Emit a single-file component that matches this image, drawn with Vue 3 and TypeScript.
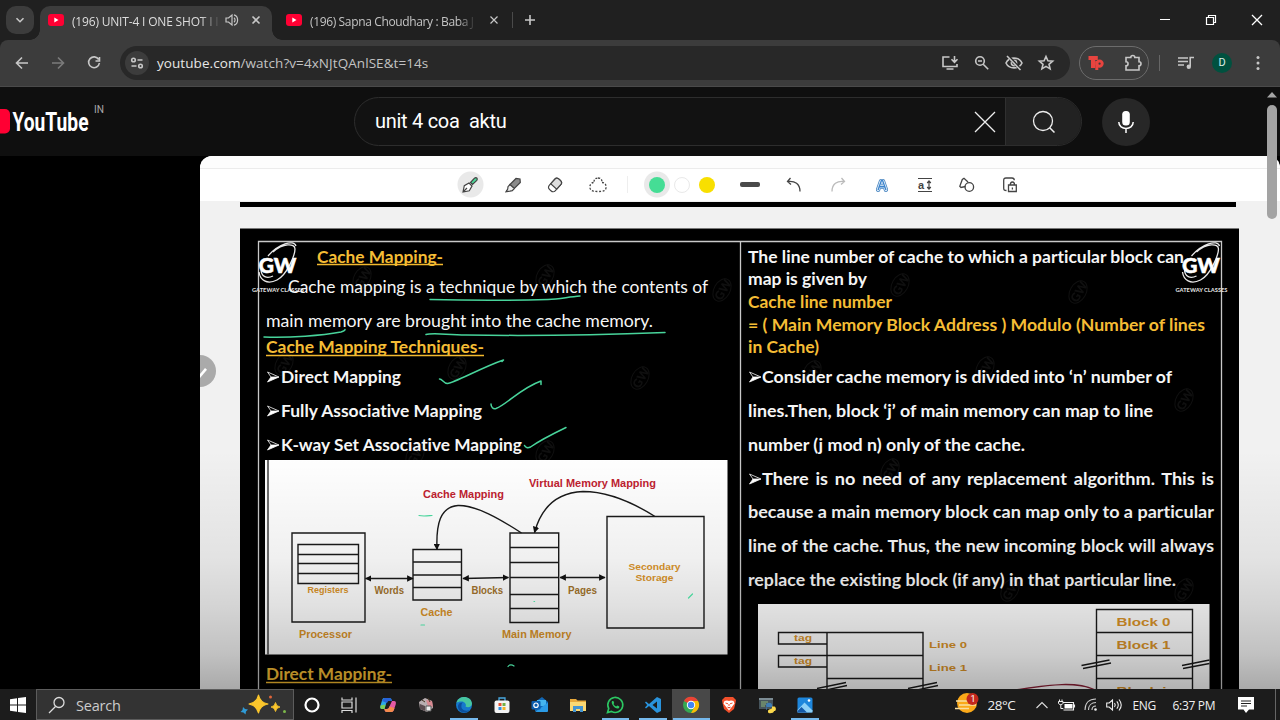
<script setup lang="ts">
interface SlideLine {
  t: string
  x: number
  y: number
  w: number
  kind?: 'plain' | 'gold' | 'head'
  ws?: number
}

const lines: SlideLine[] = [
  { t: 'Cache Mapping-', x: 317, y: 262.5, w: 126, kind: 'head' },
  { t: 'Cache mapping is a technique by which the contents of', x: 288, y: 293, w: 420, kind: 'plain' },
  { t: 'main memory are brought into the cache memory.', x: 266, y: 327, w: 387, kind: 'plain' },
  { t: 'Cache Mapping Techniques-', x: 266, y: 353, w: 218, kind: 'head' },
  { t: 'Direct Mapping', x: 281, y: 383, w: 120 },
  { t: 'Fully Associative Mapping', x: 281, y: 417, w: 201 },
  { t: 'K-way Set Associative Mapping', x: 281, y: 451, w: 241 },
  { t: 'Direct Mapping-', x: 266, y: 680, w: 126, kind: 'head' },
  { t: 'The line number of cache to which a particular block can', x: 748, y: 262.5, w: 436 },
  { t: 'map is given by', x: 748, y: 285, w: 119 },
  { t: 'Cache line number', x: 748, y: 307.5, w: 144, kind: 'gold' },
  { t: '= ( Main Memory Block Address ) Modulo (Number of lines', x: 748, y: 330.5, w: 457, kind: 'gold' },
  { t: 'in Cache)', x: 748, y: 353, w: 71, kind: 'gold' },
  { t: 'Consider cache memory is divided into ‘n’ number of', x: 762, y: 383, w: 410 },
  { t: 'lines.Then, block ‘j’ of main memory can map to line', x: 748, y: 417, w: 405 },
  { t: 'number (j mod n) only of the cache.', x: 748, y: 451, w: 277 },
  { t: 'There is no need of any replacement algorithm. This is', x: 762, y: 484.5, w: 452, ws: 2.2 },
  { t: 'because a main memory block can map only to a particular', x: 748, y: 518, w: 466 },
  { t: 'line of the cache. Thus, the new incoming block will always', x: 748, y: 552, w: 466, ws: 0.5 },
  { t: 'replace the existing block (if any) in that particular line.', x: 748, y: 586, w: 428 },
]

const bullets = [
  [267, 377], [267, 411], [267, 445], [749, 377], [749, 479],
]

const labels = [
  { t: 'Cache Mapping', x: 423, y: 498, w: 81, s: 10.5, c: 'red' },
  { t: 'Virtual Memory Mapping', x: 529, y: 486.5, w: 127, s: 10.5, c: 'red' },
  { t: 'Registers', x: 307.5, y: 593, w: 41, s: 8.5, c: 'amber' },
  { t: 'Words', x: 374.5, y: 594, w: 29.5, s: 10, c: 'brown' },
  { t: 'Blocks', x: 471.5, y: 593.5, w: 31.5, s: 10, c: 'brown' },
  { t: 'Pages', x: 568, y: 594, w: 29, s: 10, c: 'brown' },
  { t: 'Secondary', x: 628.5, y: 569.5, w: 52, s: 9.5, c: 'amber' },
  { t: 'Storage', x: 635.5, y: 580.5, w: 38, s: 9.5, c: 'amber' },
  { t: 'Cache', x: 420.5, y: 615.5, w: 32, s: 10.5, c: 'amber' },
  { t: 'Processor', x: 299, y: 638, w: 53, s: 10.5, c: 'amber' },
  { t: 'Main Memory', x: 502, y: 638, w: 69.5, s: 10.5, c: 'amber' },
  { t: 'tag', x: 794, y: 641, w: 18, s: 9, c: 'amber' },
  { t: 'tag', x: 794, y: 664, w: 18, s: 9, c: 'amber' },
  { t: 'Line 0', x: 929, y: 647.5, w: 38, s: 9.5, c: 'amber' },
  { t: 'Line 1', x: 929, y: 670.5, w: 38, s: 9.5, c: 'amber' },
  { t: 'Block 0', x: 1116.5, y: 625.5, w: 54, s: 11, c: 'amber' },
  { t: 'Block 1', x: 1116.5, y: 648.5, w: 54, s: 11, c: 'amber' },
  { t: 'Block i', x: 1116.5, y: 695, w: 50, s: 11, c: 'amber' },
]

const watermarks = [
  [362, 278], [545, 276], [722, 290], [284, 364], [640, 378], [457, 368], [900, 285], [1078, 292],
  [812, 372], [985, 368], [1184, 400], [415, 455], [545, 452], [890, 470], [1184, 590], [1010, 590],
]

const pins = [
  'cortana', 'taskview', 'copilot', 'game', 'edge', 'store', 'outlook',
  'files', 'whatsapp', 'vscode', 'chrome', 'brave', 'python', 'photos',
]
const open = ['edge', 'whatsapp', 'vscode', 'chrome', 'photos']
</script>

<template>
  <div class="screen">
    <header class="tabs">
      <div class="tab-search">
        <svg width="12" height="12" viewBox="0 0 12 12"><path d="M2.500 4.200 6 7.700l3.500-3.500" class="ln w2" /></svg>
      </div>
      <div class="tab active">
        <svg class="fav" width="16" height="12" viewBox="0 0 16 12"><rect width="16" height="12" rx="3" fill="#ff0033" /><path d="M6.300 3.600v4.800L10.500 6z" fill="#fff" /></svg>
        <span class="title t1">(196) UNIT-4 I ONE SHOT I I</span>
        <svg class="speaker" width="14" height="14" viewBox="0 0 14 14"><path d="M1 5h2.500L7 2v10L3.500 9H1zM9 4.800c1.400 1 1.400 3.400 0 4.400M9 1.800c4.800 1.400 4.800 9 0 10.400" class="ln" /></svg>
        <svg class="close" width="10" height="10" viewBox="0 0 10 10"><path d="m1.500 1.500 7 7m0-7-7 7" class="ln w2" /></svg>
      </div>
      <div class="tab">
        <svg class="fav" width="16" height="12" viewBox="0 0 16 12"><rect width="16" height="12" rx="3" fill="#ff0033" /><path d="M6.300 3.600v4.800L10.500 6z" fill="#fff" /></svg>
        <span class="title t2">(196) Sapna Choudhary : Baba J</span>
        <svg class="close" width="10" height="10" viewBox="0 0 10 10"><path d="m1.500 1.500 7 7m0-7-7 7" class="ln" /></svg>
      </div>
      <i class="tab-sep"></i>
      <svg class="plus" width="12" height="12" viewBox="0 0 12 12"><path d="M6 1v10M1 6h10" class="ln w2" /></svg>
      <div class="win">
        <span><svg width="12" height="12" viewBox="0 0 12 12"><path d="M1 5.500h10" stroke="#fff" /></svg></span>
        <span><svg width="12" height="12" viewBox="0 0 12 12"><path d="M1.500 3.500h7v7h-7zM3.500 3.500v-2h7v7h-2" fill="none" stroke="#fff" stroke-width="1.200" /></svg></span>
        <span><svg width="12" height="12" viewBox="0 0 12 12"><path d="m1 1 10 10m0-10L1 11" stroke="#fff" stroke-width="1.300" /></svg></span>
      </div>
    </header>

    <div class="toolbar">
      <span class="nav"><svg width="16" height="16" viewBox="0 0 16 16"><path d="M14 8H3M8 2.500 2.500 8 8 13.500" class="ln w2" /></svg></span>
      <span class="nav dim"><svg width="16" height="16" viewBox="0 0 16 16"><path d="M2 8h11M8 2.500 13.500 8 8 13.500" class="ln w2" /></svg></span>
      <span class="nav"><svg width="16" height="16" viewBox="0 0 16 16"><path d="M12.700 4.500A5.400 5.400 0 1 0 13.400 8M13.500 2v4h-4" class="ln w2" /></svg></span>
      <div class="omni">
        <span class="site">
          <svg width="14" height="14" viewBox="0 0 14 14"><circle cx="3.500" cy="4" r="1.800" class="ln w2" /><path d="M7.500 4h5M1.500 10h5" class="ln w2" /><circle cx="10.500" cy="10" r="1.800" class="ln w2" /></svg>
        </span>
        <span class="url"><b>youtube.com</b>/watch?v=4xNJtQAnlSE&amp;t=14s</span>
        <div class="omni-icons">
          <span><svg width="18" height="16" viewBox="0 0 18 16"><path d="M8.500 2H2v9.500h14V9M5.500 14h7M13.500 1v6m-3-2.700 3 3 3-3" class="ln w2" /></svg></span>
          <span><svg width="16" height="16" viewBox="0 0 16 16"><circle cx="6" cy="6" r="4.300" class="ln w2" /><path d="M4 6h4M9.200 9.200l5 5" class="ln w2" /></svg></span>
          <span><svg width="18" height="16" viewBox="0 0 18 16"><path d="M1 8c3-6.500 13-6.500 16 0-3 6.500-13 6.500-16 0z" class="ln w2" /><circle cx="9" cy="8" r="2.600" class="ln w2" /><path d="m3 1 12.500 13.500" stroke="#282828" stroke-width="3" /><path d="m2 1 13.500 14" class="ln w2" /></svg></span>
          <span><svg width="16" height="16" viewBox="0 0 16 16"><path d="m8 1.500 1.900 4.300 4.700.4-3.600 3.100 1.100 4.600L8 11.400l-4.100 2.500L5 9.300 1.400 6.200l4.700-.4z" class="ln w2" /></svg></span>
        </div>
      </div>
      <div class="ext">
        <span><svg width="16" height="16" viewBox="0 0 16 16"><path d="M.5 1h9.300v4H7.300v8H3V5H.5z" fill="#e8443f" /><path d="M8.800 15V6" stroke="#e8443f" stroke-width="3" /><circle cx="11.500" cy="8.600" r="2.700" fill="none" stroke="#e8443f" stroke-width="3" /></svg></span>
        <span><svg width="18" height="18" viewBox="0 0 18 18"><path d="M3 3.500h4.800a2 2 0 0 1 4 0H16v4.300a2 2 0 0 1 0 4V16H3v-4.200a2 2 0 0 0 0-4.100z" class="ln w2" /></svg></span>
      </div>
      <i class="bar-sep"></i>
      <div class="right-icons">
        <span><svg width="16" height="14" viewBox="0 0 16 14"><path d="M0 2h10M0 5.500h10M0 9h6" class="ln w2" /><path d="M12.200 10.500V1.500H16" class="ln w2" /><circle cx="10.800" cy="10.800" r="2.200" fill="#c7c7c7" /></svg></span>
        <span><b class="avatar">D</b></span>
        <span><svg width="4" height="16" viewBox="0 0 4 16"><circle cx="2" cy="2.500" r="1.500" fill="#c7c7c7" /><circle cx="2" cy="8" r="1.500" fill="#c7c7c7" /><circle cx="2" cy="13.500" r="1.500" fill="#c7c7c7" /></svg></span>
      </div>
    </div>

    <div class="yt">
      <svg class="logo" width="110" height="40" viewBox="0 0 110 40">
        <rect x="-25" y="8" width="35" height="24.500" rx="5" fill="#ff0033" />
        <text x="12.500" y="30" textLength="76" lengthAdjust="spacingAndGlyphs" class="wordmark">YouTube</text>
        <text x="94" y="12" textLength="10" lengthAdjust="spacingAndGlyphs" class="region">IN</text>
      </svg>
      <div class="search">
        <span class="query">unit 4 coa&nbsp; aktu</span>
        <svg class="clear" width="24" height="24" viewBox="0 0 24 24"><path d="m2 2 20 20m0-20L2 22" fill="none" stroke="#eee" stroke-width="1.300" /></svg>
        <div class="go"><svg width="24" height="24" viewBox="0 0 24 24"><circle cx="11" cy="11" r="9.500" fill="none" stroke="#eee" stroke-width="1.300" /><path d="m17.700 17.700 4.800 4.800" stroke="#eee" stroke-width="1.500" /></svg></div>
      </div>
      <div class="mic"><svg width="24" height="24" viewBox="0 0 24 24"><rect x="8.200" y="1" width="7.600" height="14.500" rx="3.500" fill="#fff" /><path d="M4.800 12c0 8.700 14.400 8.700 14.400 0M12 18.500V23" fill="none" stroke="#fff" stroke-width="1.500" /></svg></div>
    </div>

    <main class="stage">
      <div class="frame">
        <div class="pens">
          <span class="on"><svg width="18" height="18" viewBox="0 0 18 18"><path d="m9.500 6.500 4-4.300c1.800-1.500 3.600.3 2.300 2.200l-4.300 4.100z" fill="#4bd898" stroke="#444" stroke-width="1.200" /><path d="m2 16 1.300-6.300L8 7l3 3-2.700 4.800zM2 16l4-4" fill="#fff" stroke="#444" stroke-width="1.200" /></svg></span>
          <span><svg width="18" height="18" viewBox="0 0 18 18"><path d="m6 8.500 6-6 4 .5.3 3.500-6 6z" fill="#8a8a8a" stroke="#444" stroke-width="1.200" /><path d="m6 8.500-2 2.200-.3 2.300L2 15.700l4-.6 2.300-.5 2-2.100z" fill="#eee" stroke="#444" stroke-width="1.200" /></svg></span>
          <span><svg width="18" height="18" viewBox="0 0 18 18"><g transform="rotate(-48 9 9)"><rect x="2" y="5" width="14" height="8" rx="2.800" fill="#fff" stroke="#444" stroke-width="1.200" /><path d="M7 5h6.500c3.300 0 3.300 8 0 8H7z" fill="#ddd" stroke="#444" stroke-width="1.200" /></g></svg></span>
          <span><svg width="18" height="16" viewBox="0 0 18 16"><path d="M9 1c3 0 4.500 2 3.600 4.500 3-.2 4.900 2 4.400 5.500-.5 3-3 3.500-8 3.500s-7.500-.5-8-3.500C.5 7.500 2.400 5.300 5.400 5.500 4.500 3 6 1 9 1z" fill="none" stroke="#444" stroke-width="1.300" stroke-dasharray="2 1.600" /></svg></span>
          <span><i class="rule"></i></span>
          <span></span>
          <span class="on"><i class="dot green"></i></span>
          <span><i class="dot white"></i></span>
          <span><i class="dot yellow"></i></span>
          <span><i class="dash"></i></span>
          <span><svg width="16" height="16" viewBox="0 0 16 16"><path d="M4.500 1 1.500 4.500 5 7.500M1.500 4.500C9 3.500 14 7 14 14.500" fill="none" stroke="#444" stroke-width="1.300" /></svg></span>
          <span><svg width="16" height="16" viewBox="0 0 16 16"><path d="m11.500 1 3 3.500L11 7.500M14.500 4.500C7 3.500 2 7 2 14.500" fill="none" stroke="#bbb" stroke-width="1.300" /></svg></span>
          <span><svg width="14" height="16" viewBox="0 0 16 18"><path d="M3.500 14.500 7 4.500h2l3.500 10M5 11h6" fill="none" stroke="#4a86c0" stroke-width="5" stroke-linejoin="round" stroke-linecap="round" /><path d="M3.500 14.500 7 4.500h2l3.500 10M5 11h6" fill="none" stroke="#e0eefa" stroke-width="3.200" stroke-linejoin="round" stroke-linecap="round" /><path d="M3.500 14.800 7.300 4h1.400l3.800 10.800M5 11h6" fill="none" stroke="#3d84cc" stroke-width="1.500" /></svg></span>
          <span><svg width="16" height="16" viewBox="0 0 16 16"><path d="M1 1.500h14M1 14.500h14M12 4v8m-1.800-6L12 4l1.800 2m-3.600 4 1.800 2 1.800-2" fill="none" stroke="#444" stroke-width="1.200" /><text x="1" y="11.500" class="aa">a</text></svg></span>
          <span><svg width="16" height="16" viewBox="0 0 16 16"><path d="M6.500 9.500 2 10.500.8 9.300 3.300 2.500 5 1.300l4 3.600" fill="none" stroke="#444" stroke-width="1.300" /><circle cx="10.300" cy="10" r="4.300" fill="none" stroke="#444" stroke-width="1.300" /></svg></span>
          <span><svg width="16" height="16" viewBox="0 0 16 16"><path d="M4.500 13.500c-2.300 0-2.800-.7-2.800-2.500V3.500C1.700 1.800 2.500 1 4 1h6c1.500 0 2.300.8 2.300 2.300M6.500 8h7.800v6.500H6.500zM8.300 8c0-4 4.200-4 4.200 0M10.400 10.500v2" fill="none" stroke="#444" stroke-width="1.300" /></svg></span>
        </div>

        <svg class="slide" width="1080" height="488" viewBox="200 201 1080 488">
          <defs>
            <linearGradient id="shade" x1="0" y1="0" x2="0" y2="1">
              <stop offset="0" stop-color="#000" stop-opacity="0" />
              <stop offset=".45" stop-color="#000" stop-opacity=".06" />
              <stop offset=".65" stop-color="#000" stop-opacity=".12" />
              <stop offset=".85" stop-color="#000" stop-opacity=".2" />
              <stop offset="1" stop-color="#000" stop-opacity=".3" />
            </linearGradient>
            <marker id="arr" viewBox="0 0 10 10" refX="9" refY="5" markerWidth="6.500" markerHeight="6.500" markerUnits="userSpaceOnUse" orient="auto-start-reverse"><path d="M0 0 10 5 0 10z" class="tip" /></marker>
          </defs>
          <rect x="200" y="201" width="1080" height="488" fill="#f1f1f1" />
          <rect x="240" y="202" width="996" height="5" fill="#000" />
          <rect x="240" y="228.500" width="999" height="461" fill="#000" />

          <g v-for="(m, i) in watermarks" :key="'m' + i" :transform="`rotate(-60 ${m[0]} ${m[1]})`" opacity=".06">
            <ellipse :cx="m[0]" :cy="m[1]" rx="12" ry="8" fill="none" stroke="#fff" />
            <text :x="m[0] - 10" :y="m[1] + 5" class="wm">GW</text>
          </g>

          <path d="M258.500 690V241.500h963V690M740.500 241v449" fill="none" stroke="#c9c9c9" stroke-width="1.300" />

          <g v-for="x in [278, 1201.500]" :key="x" :transform="`translate(${x} 264)`">
            <path d="M-10-8C0-20 16-25 18-18M-5-12C5-21 17-21 17-15S9 11-1 16-18 16-19 8M-17 5c0 8 6 10 12 7" fill="none" stroke="#e8e8e8" stroke-width="1.300" />
            <text x="-19.500" y="8.500" textLength="38" lengthAdjust="spacingAndGlyphs" class="gw">GW</text>
            <text x="-26" y="28" textLength="52" lengthAdjust="spacingAndGlyphs" class="gc">GATEWAY CLASSES</text>
          </g>

          <text
            v-for="l in lines" :key="l.y + l.t" :x="l.x" :y="l.y" :textLength="l.w"
            :word-spacing="l.ws ?? 0" lengthAdjust="spacingAndGlyphs" class="body" :class="l.kind"
          >{{ l.t }}</text>
          <path v-for="(b, i) in bullets" :key="'b' + i" :transform="`translate(${b[0]} ${b[1]})`" d="M.5-5 12 0 .5 5 4 0zM4 0h8" fill="#000" stroke="#ddd" stroke-width=".9" />
          <path v-for="(b, i) in bullets" :key="'c' + i" :transform="`translate(${b[0]} ${b[1]})`" d="M4 0h8L.5 5z" fill="#fff" />
          <path d="M317 264.500h126M266 355.500h218M266 682.500h126" stroke="#f3b92e" stroke-width="1.500" />

          <rect x="265" y="460" width="462.500" height="194.500" fill="#fff" />
          <path d="M268 460v194.500" stroke="#222" stroke-width="1.300" />
          <g class="box">
            <path d="M292 533h73v89h-73zM298 544.500h60.500v39H298zM298 554.500h60.500M298 563.500h60.500M298 573.500h60.500" />
            <path d="M413 549.500h48.500V600H413zM413 562h48.500M413 575h48.500M413 587.500h48.500" />
            <path d="M510 533h48.700v89.500H510zM510 547.500h48.700M510 562.500h48.700M510 577.500h48.700M510 594.500h48.700M510 608.500h48.700" />
            <path d="M607 516.500h97V628h-97z" />
            <path d="M365.500 578.500H413" marker-start="url(#arr)" marker-end="url(#arr)" />
            <path d="M463 578.500 508.500 577.500" marker-start="url(#arr)" marker-end="url(#arr)" />
            <path d="M560 577.500h45" marker-start="url(#arr)" marker-end="url(#arr)" />
            <path d="M521.500 533C500 519 476 505 458 505.500 440 507 436 524 437 549.500" marker-end="url(#arr)" />
            <path d="M655 516.500C632 502 607 491.500 583 491.500 558 492.500 542 505 534.500 532.500" marker-end="url(#arr)" />
          </g>

          <rect x="758" y="604" width="451.500" height="86" fill="#fff" />
          <g class="box">
            <path d="M778.500 632.500H827V644h-48.500zM778.500 655.500H827V667h-48.500zM827 690v-57.500h96V690M827 655.500h96M827 678.500h96" />
            <path d="M1096.500 690v-80.500h96V690M1096.500 632.500h96M1096.500 655.500h96M1096.500 678.500h96" />
            <path d="m1081.500 665.500 28-5.500M1083 668.500l28-5.500M1182 665.500l27.500-5.500M1183 668.500l26.500-5M817 688.500l29-6M819 691.500l28-6M908 688.500l29-6M910 691.500l28-6" />
            <path d="M1015 690c28-4 60-10 80 0" class="arc" />
          </g>
          <text v-for="l in labels" :key="l.t + l.y" :x="l.x" :y="l.y" :textLength="l.w" :font-size="l.s" lengthAdjust="spacingAndGlyphs" class="lbl" :class="l.c">{{ l.t }}</text>

          <rect x="200" y="450" width="1080" height="240" fill="url(#shade)" />

          <g fill="none" stroke="#48d49b" stroke-width="1.500" stroke-linecap="round" stroke-linejoin="round">
            <path d="M430 299.500c30 .8 90 .8 118 0 12-.6 20-2.500 32-3.500" />
            <path d="M264 337c26 1 58-1.500 77-5 3-.8 4-1.500 4-2.500M426 334.500c6-2 18 0 40 .5 66 1 120 .5 199-2.500" />
            <path d="M439.500 379c3 0 4 4.500 8 4.500 8-1 34-16 56-23.500l-1.500 1.500M491 404c0 3 2 5.500 5 4.500 11-4 24-20 45-27.500v3.500M524.500 445.500c1 2 3 3 6 1.500 10-7 22-13 35.500-19.500" />
            <path d="M419 515.500c4 1 8 .4 13 0M421 625h3.500M688.500 598l4-4M508 666.500c1.500-2 4-2 6-.5M534 601.500h.6" stroke-width="1.200" />
          </g>
          <circle cx="200" cy="371" r="16" fill="#aaa" />
          <path d="m197 377.500 8-9.500 2 1.700-8 9.500z" fill="#fff" />
        </svg>
      </div>
    </main>

    <footer class="taskbar">
      <div class="start"><svg width="16" height="16" viewBox="0 0 16 16"><path d="M0 2.200 7 1.200v6.300H0zM8 1 16 0v7.500H8zM0 8.500h7v6.300l-7-1zM8 8.500h8V16l-8-1z" fill="#fff" /></svg></div>
      <div class="find">
        <svg width="18" height="18" viewBox="0 0 18 18"><circle cx="11" cy="6.500" r="5" fill="none" stroke="#ddd" stroke-width="1.300" /><path d="M7.500 10.500 1 17" stroke="#ddd" stroke-width="1.300" /></svg>
        <span>Search</span>
        <svg class="sparkle" width="48" height="22" viewBox="0 0 48 22"><path d="M18.500 1q1.500 7.500 9.500 9-8 1.500-9.500 9-1.500-7.500-9.500-9 8-1.500 9.500-9z" fill="#fbc62c" stroke="#fbc62c" stroke-width="1.200" stroke-linejoin="round" /><path d="M35.500 8.500q.8 4 4.500 4.500-3.700.5-4.500 4.500-.8-4-4.500-4.500 3.700-.5 4.500-4.500z" fill="#fbc62c" stroke="#fbc62c" stroke-width=".8" /><path d="m3 13 2 2 3 .5-2 2-.5 3-2-2-3-.5 2-2z" fill="#2f9bd6" /><circle cx="30.500" cy="3" r="1.500" fill="#e0653a" /><circle cx="44.500" cy="17.500" r="1.500" fill="#7cb84a" /></svg>
      </div>
      <div class="pins">
        <div v-for="p in pins" :key="p" class="pin" :class="{ open: open.includes(p), current: p === 'chrome' }">
          <svg width="18" height="18" viewBox="0 0 18 18">
            <circle v-if="p === 'cortana'" cx="9" cy="9" r="6.500" fill="none" stroke="#fff" stroke-width="2.200" />
            <path v-else-if="p === 'taskview'" d="M1 1.500V4h10V1.500M1 6h10v6H1zM1 17v-2.500h10V17M15 1.500v15" fill="none" stroke="#ddd" stroke-width="1.200" />
            <g v-else-if="p === 'copilot'"><path d="M5 2h5c2 0 2.500 1 3 3H9.500C8 5 7.600 6 7 8l-1.500 5H3C1 13 1 11.500 1.500 9.500L3 4.500C3.400 3 4 2 5 2z" fill="#2aa6e8" /><path d="M5 2h5c2 0 2.500 1 3 3H9L8 7 3 5z" fill="#2763d8" /><path d="m1.500 9.500 5-1L5.500 13H3c-1.600 0-2-1.500-1.500-3.500z" fill="#7bcf57" /><path d="M13 5h2c2 0 2.200 1.500 1.700 3.500L15 13.500c-.5 1.500-1.200 2.500-2.500 2.500H8c-2 0-2.200-1-2.600-3H8c1.300 0 1.900-.8 2.400-2.500z" fill="#e45aa4" /><path d="M5.400 13H8c1.300 0 1.900-.8 2.400-2.500l5.100 1.500c-.6 2.500-1.500 4-3 4H8c-2 0-2.200-1-2.600-3z" fill="#f58b4c" /></g>
            <g v-else-if="p === 'game'"><path d="m2 6 6-4 7 3 1 7-6 4-7-3z" fill="#b9aeb0" /><path d="m9 4 6 1 1 6-5-1z" fill="#d98a92" /><path d="m3 8 5 2v5l-5-2z" fill="#5b4c50" /><path d="M9 10h5v5H9z" fill="#eee" stroke="#555" /><path d="m5 4 3 2M11 2l2 4" stroke="#432" /></g>
            <g v-else-if="p === 'edge'"><circle cx="9" cy="9" r="8" fill="#1678cc" /><path d="M1.500 7C3-1 16-1 17 7.500 17 11 13 12 10.500 10.500 12 8 9 5 6 5.500 4 5.500 2.500 6 1.500 7z" fill="#47c6a0" /><path d="M6.500 9c-1 4 3 7 8 5-4 4-9 3-11-1C2 9 4 6 8 6.500 7 7 6.700 8 6.500 9z" fill="#0b4f9e" /></g>
            <g v-else-if="p === 'store'"><path d="M6 5V2h6v3" fill="none" stroke="#48a8e0" stroke-width="1.300" /><rect x="1.500" y="4.500" width="15" height="12.500" rx="2" fill="#f4f4f4" /><path d="M5.500 7h3v3h-3z" fill="#e8502f" /><path d="M9.500 7h3v3h-3z" fill="#72b043" /><path d="M5.500 11h3v3h-3z" fill="#2f8fe0" /><path d="M9.500 11h3v3h-3z" fill="#f3b528" /></g>
            <g v-else-if="p === 'outlook'"><path d="M4 6 11 1l6 5v9H4z" fill="#1267b4" /><path d="M6 4h9v6H6z" fill="#45b5ee" /><path d="m4 16 13-9.500V15q0 1-1 1z" fill="#2b9be6" /><rect x=".5" y="5" width="9" height="8.500" rx="1" fill="#0a5cad" /><circle cx="5" cy="9.200" r="2.200" fill="none" stroke="#fff" stroke-width="1.200" /></g>
            <g v-else-if="p === 'files'"><path d="M1 3h6l1.500 1.500H17V15H1z" fill="#e9a93b" /><path d="M1 6h16v9H1z" fill="#fbd873" /><path d="M4 10h10v6h-3v-3H7v3H4z" fill="#4594d0" /></g>
            <g v-else-if="p === 'whatsapp'"><path d="m1.500 16.500 1.200-4A7.500 7.500 0 1 1 5.500 15.400z" fill="none" stroke="#2cc863" stroke-width="1.600" /><path d="M6.200 5c-2 2 2.800 8.300 6 7.500 1.500-.5 1.200-2 .8-2.200l-1.800-.8-1 1C9 10.200 8 9 7.500 8l.7-1-.8-2z" fill="#2cc863" /></g>
            <g v-else-if="p === 'vscode'"><path d="m13 1 4 2v12l-4 2-8-7-3 2.500L1 11.500 3.200 9 1 6.500l1-1L5 8zM13 5.500 8.500 9l4.500 3.500z" fill="#2993dc" fill-rule="evenodd" /></g>
            <g v-else-if="p === 'chrome'"><circle cx="9" cy="9" r="8" fill="#35a853" /><path d="M9 9 2 5a8 8 0 0 1 14 0z" fill="#ea4335" /><path d="M9 5h7a8 8 0 0 1-7 12l3.500-6z" fill="#fbbc05" /><circle cx="9" cy="9" r="4.200" fill="#fff" /><circle cx="9" cy="9" r="3.200" fill="#4285f4" /></g>
            <g v-else-if="p === 'brave'"><path d="M5 1h8l1.500 1.500L16 4l-.5 3-1.500 6-5 4-5-4-1.500-6L2 4l1.500-1.500z" fill="#f2502b" /><path d="m4.500 5 2.500-.5L9 5l2-.5 2.500.5 1 2.500-2.300 3L9 14.500l-3.200-4-2.300-3z" fill="#fff" /><path d="m5.500 7 2.500.8M12.500 7l-2.500.8M9 8v2m-1.500 1L9 12l1.500-1" stroke="#f2502b" /></g>
            <g v-else-if="p === 'python'"><path d="M1 2h14v11H1z" fill="#46545c" /><path d="M1 2h14v2H1z" fill="#7c8c94" /><path d="M3 6h7M3 8h5M3 10h4" stroke="#8fb67a" /><path d="M8 9c0-3 6-3 6 0v2H9.500c-2 0-2 3-.5 3" fill="#3f7db5" /><path d="M10 16c0 2 6 1.500 6-1h1c1.500-1 1-4-.5-4.500H14V12c0 1.500-4 1-4 3z" fill="#fbd84b" /></g>
            <g v-else><rect x="1.500" y="1.500" width="15" height="15" rx="1.500" fill="#1d86dc" /><path d="m1.500 14 7-7.500 8 8v2h-15z" fill="#8dd0f7" /><path d="m1.500 15 4-4 5.500 5.500H1.500z" fill="#1559a8" /><circle cx="13" cy="4.500" r="1.300" fill="#fff" /></g>
          </svg>
        </div>
      </div>
      <div class="tray">
        <svg class="weather" width="26" height="22" viewBox="0 0 26 22"><circle cx="12" cy="11" r="10" fill="#fba919" /><path d="M1 9h12M4 13h17M0 16.500h14" stroke="#f9dfa2" stroke-width="1.500" /><circle cx="17.500" cy="7" r="6" fill="#c4281d" /><text x="15.600" y="10.200" class="badge">1</text></svg>
        <span class="temp">28°C</span>
        <svg class="chev" width="12" height="8" viewBox="0 0 12 8"><path d="m.5 7 5.500-5.500L11.500 7" fill="none" stroke="#ddd" stroke-width="1.100" /></svg>
        <svg class="batt" width="17" height="12" viewBox="0 0 17 12"><path d="M5 3.500h10.500v7.500H5.500M16.500 5.500v3" fill="none" stroke="#eee" stroke-width="1.100" /><path d="M6.500 5h8v4.500h-8z" fill="#fff" /><path d="M1.500.5v1.800M4 .5v1.800M.5 2.500h4.500v1.800c0 1.700-4.500 1.700-4.500 0zM2.800 6v3.500h2.500" fill="none" stroke="#eee" /></svg>
        <svg class="wifi" width="13" height="13" viewBox="0 0 13 13"><path d="M1 12C1 5 5 1 12 1M4.500 12C4.500 7.500 7.500 4.500 12 4.500M8 12c0-2.500 1.500-4 4-4" fill="none" stroke="#ccc" stroke-width="1.100" /><circle cx="11.500" cy="11.500" r="1.300" fill="#eee" /></svg>
        <svg class="vol" width="16" height="14" viewBox="0 0 16 14"><path d="M.7 5h2.500L6.500 2v10L3.200 9H.7zM8.500 5q1.500 2 0 4M10.800 3.300q3 3.700 0 7.400M13 1.500q4.500 5.500 0 11" fill="none" stroke="#eee" stroke-width="1.100" /></svg>
        <span class="lang">ENG</span>
        <span class="time">6:37 PM</span>
        <svg class="note" width="16" height="16" viewBox="0 0 16 16"><path d="M0 0h16v12.500h-5L8 16l-2.500-3.500H0z" fill="#fff" /><path d="M3 4h10M3 6.500h10M3 9h6" stroke="#222" /></svg>
        <i class="desk"></i>
      </div>
    </footer>

    <div class="scroll">
      <svg width="10" height="6" viewBox="0 0 10 6"><path d="M0 5.500 5 0l5 5.500z" fill="#a5a5a5" /></svg>
      <i></i>
    </div>
  </div>
</template>

<style>
body { margin: 0; overflow: hidden; background: #000; }
</style>

<style scoped>
.screen { position: relative; width: 1280px; height: 720px; display: flex; flex-direction: column; overflow: hidden; background: #000; font-family: "Open Sans", "Noto Sans", sans-serif; color: #ddd; }
.screen svg { display: block; flex: none; overflow: visible; }
.screen .slide { overflow: hidden; }
.screen i { display: block; flex: none; }
.ln { fill: none; stroke: #c7c7c7; stroke-width: 1.2; }
.w2 { stroke-width: 1.6; }

.tabs { height: 40px; flex: none; display: flex; align-items: center; background: #202020; z-index: 1; }
.tab-search { width: 28px; height: 28px; margin-left: 6px; border-radius: 10px; background: #3c3c3c; display: flex; align-items: center; justify-content: center; }
.tab { position: relative; display: flex; align-items: center; box-sizing: border-box; width: 232px; height: 34px; margin: 6px 0 0 6px; padding: 0 0 6px 8px; }
.tab.active { background: #3c3c3c; border-radius: 10px 10px 0 0; }
.tab.active::before, .tab.active::after { content: ""; position: absolute; bottom: 0; width: 10px; height: 10px; }
.tab.active::before { left: -10px; background: radial-gradient(circle at 0 0, transparent 9.5px, #3c3c3c 10px); }
.tab.active::after { right: -10px; background: radial-gradient(circle at 100% 0, transparent 9.5px, #3c3c3c 10px); }
.title { margin: 3px 0 0 8px; font-size: 12px; line-height: 16px; white-space: pre; overflow: hidden; }
.t1 { width: 149px; letter-spacing: -0.18px; -webkit-mask-image: linear-gradient(90deg, #000 86%, transparent); }
.t2 { width: 168px; letter-spacing: -0.36px; color: #c4c4c4; -webkit-mask-image: linear-gradient(90deg, #000 88%, transparent 99%); }
.speaker { margin-left: 4px; }
.close { margin-left: 12px; }
.t2 + .close { margin-left: 11px; }
.tab-sep { width: 1px; height: 16px; margin-left: 2px; background: #4a4a4a; }
.plus { margin-left: 11px; }
.win { display: flex; margin-left: auto; }
.win span { width: 46px; height: 40px; display: flex; align-items: center; justify-content: center; }

.toolbar { height: 47px; flex: none; box-sizing: border-box; display: flex; align-items: center; padding: 0 4px; background: #3c3c3c; border-bottom: 1px solid #4a4a4a; border-radius: 8px 8px 0 0; box-shadow: 0 -8px 0 #202020; }
.nav { width: 36px; display: flex; justify-content: center; }
.dim { opacity: .45; }
.omni { flex: none; width: 950px; height: 34px; margin-left: 8px; box-sizing: border-box; padding: 0 8px 0 5px; border-radius: 17px; background: #282828; display: flex; align-items: center; }
.site { width: 24px; height: 24px; border-radius: 50%; background: #3c3c3c; display: flex; align-items: center; justify-content: center; }
.url { margin-left: 8px; font-size: 13.5px; letter-spacing: 0.07px; color: #c3c3c3; white-space: nowrap; }
.url b { font-weight: 400; color: #e6e6e6; }
.omni-icons { margin-left: auto; display: flex; }
.omni-icons span { width: 32px; display: flex; align-items: center; justify-content: center; }
.ext { flex: none; width: 70px; height: 34px; margin-left: 9px; box-sizing: border-box; border: 1px solid #6c6c6c; border-radius: 17px; display: flex; align-items: center; justify-content: center; }
.ext span { flex: none; width: 36px; display: flex; justify-content: center; }
.bar-sep { width: 1px; height: 16px; margin: 0 8px 0 10px; background: #666; }
.right-icons { display: flex; align-items: center; }
.right-icons span { width: 36px; display: flex; justify-content: center; }
.avatar { width: 20px; height: 20px; border-radius: 50%; background: #00513f; color: #dceee8; font: 11px/20px Roboto, sans-serif; text-align: center; }

.yt { height: 69px; flex: none; display: flex; align-items: center; background: #0f0f0f; }
.logo { margin-top: -1px; }
.wordmark { font: 700 26px Roboto, sans-serif; fill: #fff; }
.region { font: 11.5px Roboto, sans-serif; fill: #aaa; }
.search { width: 728px; height: 49px; margin-left: 244px; box-sizing: border-box; display: flex; align-items: center; border: 1px solid #2d2d2d; border-radius: 25px; background: #121212; overflow: hidden; }
.query { flex: 1; padding: 0 0 2px 20px; font: 20px Roboto, sans-serif; letter-spacing: -0.28px; color: #fff; }
.clear { margin-right: 8px; }
.go { width: 76px; height: 49px; background: #222; border-left: 1px solid #303030; box-sizing: border-box; display: flex; align-items: center; justify-content: center; }
.mic { width: 48px; height: 48px; margin-left: 20px; border-radius: 50%; background: #272727; display: flex; align-items: center; justify-content: center; }

.stage { height: 533px; flex: none; padding-left: 200px; background: #000; }
.frame { height: 533px; border-radius: 12px 12px 0 0; overflow: hidden; background: #fff; }
.pens { height: 45px; box-sizing: border-box; padding: 12px 0 0 248.5px; display: grid; grid-template-columns: 43px 43px 40px 46px 13px 10.5px 26px 24px 25px 62px 26px 62px 25px 61px 23px 64px; background: linear-gradient(#fdfdfd 0 12px, #ececec 12px 13px, #fff 13px); }
.pens span { display: flex; align-items: center; justify-content: center; }
.pens .on { background: radial-gradient(circle, #e9e9e9 12.5px, transparent 13.5px); }
.dot { width: 16px; height: 16px; border-radius: 50%; box-sizing: border-box; }
.green { background: #45dd95; }
.white { background: #fff; border: 1px solid #e9e9e9; }
.yellow { background: #f8df00; }
.dash { width: 20px; height: 5px; border-radius: 2px; background: #4a4a4a; }
.rule { width: 1px; height: 17px; background: #eee; }
.aa { font: 700 11px "Liberation Sans", sans-serif; fill: #444; }
.body { font: 700 17px Lato, "Open Sans", sans-serif; font-variant-ligatures: none; fill: #f6f6f6; }
.body.plain { font-weight: 400; }
.body.gold, .body.head { fill: #f5bd35; }
.gw { font: 900 21px Lato, sans-serif; fill: #fff; stroke: #fff; stroke-width: .5px; }
.gc { font: 900 5.5px Lato, sans-serif; fill: #ddd; }
.wm { font: 900 12px Lato, sans-serif; fill: #fff; }
.box path { fill: none; stroke: #1a1a1a; stroke-width: 1.4; }
.box .arc { stroke: #8b1f35; }
.tip { fill: #111; }
.lbl { font-family: "Liberation Sans", Arial, sans-serif; font-weight: 700; }
.red { fill: #c0222f; }
.amber { fill: #db9429; }
.brown { fill: #a3742c; }

.taskbar { height: 31px; flex: none; display: flex; align-items: center; background: #1c1c1c; }
.start { width: 36px; display: flex; justify-content: center; }
.find { width: 258px; height: 31px; box-sizing: border-box; padding-left: 11px; display: flex; align-items: center; background: #333; border: 1px solid #5c5c5c; font-size: 14.5px; color: #ccc; }
.find span { margin: 2px 0 0 10px; letter-spacing: -0.2px; }
.sparkle { margin-left: auto; margin-right: 5px; }
.pins { display: flex; margin-left: -0.6px; }
.pin { width: 37.9px; height: 31px; display: flex; align-items: center; justify-content: center; position: relative; }
.pin.open::after { content: ""; position: absolute; left: 5px; right: 5px; bottom: 0; height: 2px; background: #76b9ed; }
.pin.current { background: #484848; }
.pin.current::after { left: 1px; right: 0; }
.tray { flex: 1; display: flex; align-items: center; margin-left: 131.6px; font-size: 12px; color: #f0f0f0; white-space: nowrap; }
.badge { font: 9px Roboto, sans-serif; fill: #fff; }
.weather { margin-top: -3px; }
.temp { width: 28px; margin: 1px 0 0 6px; font-size: 13.5px; letter-spacing: -0.45px; }
.chev { margin-left: 21px; }
.batt { margin-left: 10px; }
.wifi { margin-left: 9px; }
.vol { margin-left: 9px; }
.lang { width: 24px; margin: 1px 0 0 10px; letter-spacing: -0.3px; }
.time { width: 44px; margin: 1px 0 0 16px; letter-spacing: -0.3px; }
.note { margin-left: 22px; }
.desk { width: 1px; height: 31px; margin-left: auto; margin-right: 4px; background: #666; }

.scroll { position: absolute; top: 92px; right: 3px; width: 10px; display: flex; flex-direction: column; gap: 7px; z-index: 3; }
.scroll i { height: 114px; border-radius: 5px; background: #a3a3a3; }
</style>
